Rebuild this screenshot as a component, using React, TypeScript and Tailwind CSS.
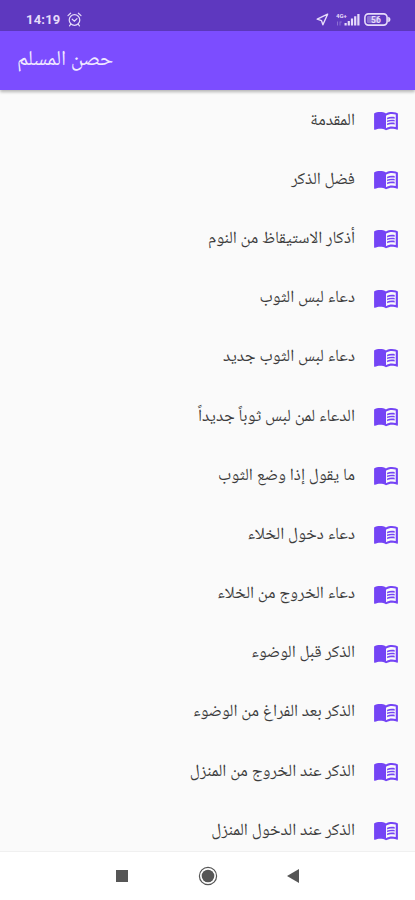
import { MdMenuBook } from "react-icons/md";

const chapters = [
  "المقدمة",
  "فضل الذكر",
  "أذكار الاستيقاظ من النوم",
  "دعاء لبس الثوب",
  "دعاء لبس الثوب جديد",
  "الدعاء لمن لبس ثوباً جديداً",
  "ما يقول إذا وضع الثوب",
  "دعاء دخول الخلاء",
  "دعاء الخروج من الخلاء",
  "الذكر قبل الوضوء",
  "الذكر بعد الفراغ من الوضوء",
  "الذكر عند الخروج من المنزل",
  "الذكر عند الدخول المنزل",
];

const AlarmIcon = () => (
  <svg className="h-[15px] w-[15px]" fill="none" stroke="currentColor" strokeWidth="1.2" viewBox="0 0 15 15">
    <circle cx="7.5" cy="8" r="5.3" />
    <path d="M1 3.6 3.6 1.2M14 3.6 11.4 1.2M3.8 12.2 2.5 13.8M11.2 12.2l1.3 1.6M5.2 7.2l2.2 2 2.6-2.6" strokeLinecap="round" />
  </svg>
);

const LocationIcon = () => (
  <svg className="h-[13px] w-[13px]" fill="none" stroke="currentColor" strokeWidth="1.4" viewBox="0 0 13 13">
    <path d="M11.6 1.2 1.2 6.2l4.3 1.4 1.4 4.2z" strokeLinejoin="round" />
  </svg>
);

const SignalIcon = () => (
  <svg className="h-[13px] w-[24px]" fill="currentColor" viewBox="0 0 24 13">
    <text x="0" y="5.2" fontSize="6" fontWeight="700" fontFamily="Roboto">
      4G+
    </text>
    <path d="M8.5 10h2.2v2.5H8.5zM11.7 8h2.2v4.5h-2.2zM14.9 5.5h2.2v7h-2.2zM18.1 3.2h2.2v9.3h-2.2zM21.3 1h2.2v11.5h-2.2z" />
    <path d="M1 8.5h1v4H1zM3.5 8.5h2.2v1H4.5v3h-1z" opacity=".35" />
  </svg>
);

const BatteryIcon = () => (
  <svg className="h-[13px] w-[27px]" viewBox="0 0 27 13">
    <rect x=".9" y=".9" width="22.2" height="11.2" rx="3.5" fill="none" stroke="currentColor" strokeWidth="1.6" />
    <rect x="3" y="3" width="12" height="7" rx="1" fill="currentColor" opacity=".35" />
    <path d="M24.2 3.8c1.6.4 2.2 1.4 2.2 2.7s-.6 2.3-2.2 2.7z" fill="currentColor" />
    <text x="12" y="9.6" fontSize="8.5" fontWeight="700" fontFamily="Roboto" textAnchor="middle" fill="currentColor">
      56
    </text>
  </svg>
);

export default function App() {
  return (
    <div className="flex h-[900px] w-[415px] flex-col overflow-hidden bg-[#fafafa] font-['Noto_Naskh_Arabic','Noto_Sans',serif]">
      <div className="flex h-[31px] shrink-0 items-center justify-between bg-[#5e38bf] pt-2 pr-[24px] pl-[26px] text-[#e6dcfa]">
        <div className="flex items-center gap-[6px]">
          <span className="font-[Roboto,sans-serif] text-[13px] leading-none font-bold tracking-[0.2px]">14:19</span>
          <AlarmIcon />
        </div>
        <div className="flex items-center">
          <LocationIcon />
          <span className="ml-[7px] flex">
            <SignalIcon />
          </span>
          <span className="ml-[4px] flex">
            <BatteryIcon />
          </span>
        </div>
      </div>

      <header className="z-10 flex h-[59px] shrink-0 items-center bg-[#7c4dff] pl-[17px] shadow-[0_2px_3px_rgba(0,0,0,0.28)]">
        <h1 dir="rtl" className="text-[21.3px] leading-none text-[#f0e9ff]">
          حصن المسلم
        </h1>
      </header>

      <ul dir="rtl" className="min-h-0 flex-1 overflow-hidden pt-[1.5px]">
        {chapters.map((title) => (
          <li key={title} className="flex h-[59.2px] items-center gap-[18px] pr-[16px]">
            <span className="-mt-px flex pb-px">
              <MdMenuBook className="size-[26px] text-[#7444f5]" />
            </span>
            <span className="text-[17px] leading-none text-[#3c3c3c]">{title}</span>
          </li>
        ))}
      </ul>

      <nav className="flex h-[49px] shrink-0 items-center justify-center gap-[69.5px] border-t border-[#f0f0f0] bg-white pb-px text-[#565656]">
        <span className="size-[12px] bg-current" />
        <svg className="size-[20px]" viewBox="0 0 20 20">
          <circle cx="10" cy="10" r="8.6" fill="none" stroke="currentColor" strokeWidth="1.2" />
          <circle cx="10" cy="10" r="6.3" fill="currentColor" />
        </svg>
        <svg className="h-[14px] w-[12px]" viewBox="0 0 12 14" fill="currentColor">
          <path d="M12 0v14L0 7z" />
        </svg>
      </nav>
    </div>
  );
}
